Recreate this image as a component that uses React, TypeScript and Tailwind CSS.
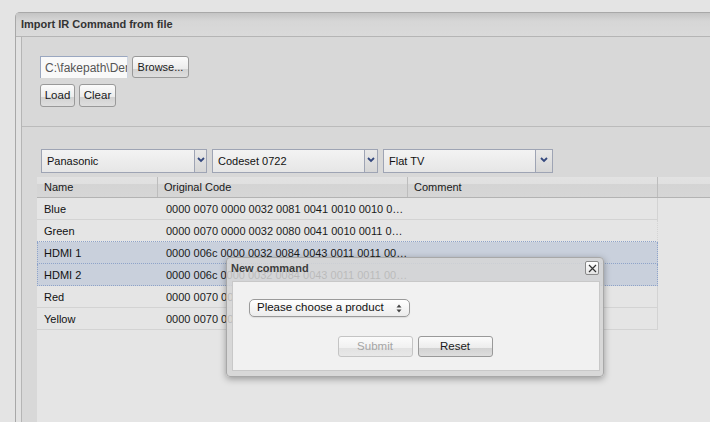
import React from "react";

const rows = [
  { name: "Blue", code: "0000 0070 0000 0032 0081 0041 0010 0010 0010 0030 0010 0030", selected: false },
  { name: "Green", code: "0000 0070 0000 0032 0080 0041 0010 0011 0010 0030 0010 0030", selected: false },
  { name: "HDMI 1", code: "0000 006c 0000 0032 0084 0043 0011 0011 0011 0032 0011 0032", selected: true },
  { name: "HDMI 2", code: "0000 006c 0000 0032 0084 0043 0011 0011 0011 0032 0011 0032", selected: true },
  { name: "Red", code: "0000 0070 0000 0032 0080 0041 0010 0010 0010 0030 0010 0030", selected: false },
  { name: "Yellow", code: "0000 0070 0000 0032 0080 0041 0010 0011 0010 0030 0010 0030", selected: false },
];

const btn =
  "flex items-center justify-center rounded-[3px] border border-[#999] bg-[linear-gradient(#fbfbfb,#ececec_58%,#d2d2d2_58%,#dedede)] text-[11.5px] text-[#1a1a1a]";

function Chevron() {
  return (
    <svg width="8" height="6" viewBox="0 0 8 6" className="-mt-[3px]">
      <polyline points="1,1 4,4 7,1" fill="none" stroke="#34487e" strokeWidth="1.8" />
    </svg>
  );
}

function Combo({ label, width, arrow }: { label: string; width: number; arrow: number }) {
  return (
    <div
      className="flex h-[24px] border border-[#9ea4b4] bg-[linear-gradient(#f3f3f3,#e6e6e6)]"
      style={{ width }}
    >
      <div className="flex flex-1 items-center pl-[5px] pt-[1px] text-[11px] text-[#111]">{label}</div>
      <div
        className="flex items-center justify-center border-l border-[#9ea4b4] bg-[linear-gradient(#e8e8e8,#d6d6d6)]"
        style={{ width: arrow }}
      >
        <Chevron />
      </div>
    </div>
  );
}

function NewCommandDialog() {
  return (
    <div className="absolute left-[226px] top-[257px] flex h-[120px] w-[378px] flex-col rounded-[4px] border border-[#a8a8a8] bg-[#d6d6d6]/85 shadow-[0_2px_7px_rgba(0,0,0,0.35)]">
      <div className="flex h-[23px] items-start justify-between pl-[4px] pr-[4px]">
        <span className="pt-[4px] text-[11px] font-bold leading-[13px] text-[#3c3c3c]">New command</span>
        <button
          type="button"
          className="mt-[3px] flex h-[14px] w-[14px] items-center justify-center rounded-[2px] border border-[#8a8a8a] bg-[linear-gradient(#ffffff,#e4e4e4)]"
        >
          <svg width="9" height="9" viewBox="0 0 9 9">
            <path d="M1 1 L8 8 M8 1 L1 8" stroke="#333" strokeWidth="1.2" />
          </svg>
        </button>
      </div>
      <div className="ml-[5px] h-[90px] w-[368px] border border-[#c8c8c8] bg-[#f1f1f1] pl-[16px] pt-[17px]">
        <div className="flex h-[18px] w-[161px] items-center justify-between rounded-[5px] border border-[#9a9a9a] bg-[linear-gradient(#ffffff,#ececec)] pl-[7px] pr-[7px] shadow-[0_1px_1px_rgba(0,0,0,0.08)]">
          <span className="text-[11.5px] text-[#111]">Please choose a product</span>
          <svg width="6" height="9" viewBox="0 0 6 9">
            <path d="M0.5 3.5 L3 0.5 L5.5 3.5 Z M0.5 5.5 L3 8.5 L5.5 5.5 Z" fill="#444" />
          </svg>
        </div>
        <div className="mt-[19px] flex justify-center gap-[5px] pr-[18px]">
          <button
            type="button"
            disabled
            className="flex h-[21px] w-[75px] items-center justify-center rounded-[3px] border border-[#c4c4c4] bg-[linear-gradient(#fbfbfb,#f0f0f0_60%,#e2e2e2_60%,#e8e8e8)] text-[11.5px] text-[#a5a5a5]"
          >
            Submit
          </button>
          <button type="button" className={`${btn} h-[21px] w-[75px]`}>
            Reset
          </button>
        </div>
      </div>
    </div>
  );
}

export default function App() {
  return (
    <div className="relative h-[422px] w-[710px] overflow-hidden bg-[#e4e4e4] pl-[15px] pt-3 font-['Liberation_Sans',Arial,sans-serif] text-[11px] text-[#111]">
      <div className="flex h-full flex-col rounded-tl-[5px] border-l border-t border-[#a8a8a8] bg-[#e2e2e2]">
        <div className="h-[24px] shrink-0 border-b border-[#b5b5b5] bg-[linear-gradient(#c4c4c4,#d6d6d6_35%,#dadada)] pl-[5px] text-[11px] font-bold leading-[23px] text-[#333]">
          Import IR Command from file
        </div>

        <div className="flex flex-1 pl-[5px]">
          <div className="flex flex-1 flex-col border-l border-[#b5b5b5] bg-[#d8d8d8]">
            {/* file import */}
            <div className="h-[90px] shrink-0 border-b border-[#bbbbbb] pl-[18px] pt-[19px]">
              <div className="flex gap-[4px]">
                <div className="flex h-[22px] w-[88px] items-center overflow-hidden border-l border-t border-r border-[#9aa7c0] border-r-[#cfd6e2] bg-[#f9f9f9] pl-[4px] text-[12px] whitespace-nowrap text-[#555]">
                  C:\fakepath\Denon.ir
                </div>
                <button type="button" className={`${btn} h-[22px] w-[57px] pt-[1px] !text-[11px]`}>
                  Browse...
                </button>
              </div>
              <div className="mt-[6px] flex gap-[4px]">
                <button type="button" className={`${btn} h-[23px] w-[35px] pt-[1px]`}>
                  Load
                </button>
                <button type="button" className={`${btn} h-[23px] w-[37px] pt-[1px]`}>
                  Clear
                </button>
              </div>
            </div>

            {/* command grid */}
            <div className="flex flex-1 flex-col pt-[22px]">
              <div className="flex gap-[5px] pl-[19px]">
                <Combo label="Panasonic" width={166} arrow={12} />
                <Combo label="Codeset 0722" width={166} arrow={13} />
                <Combo label="Flat TV" width={170} arrow={17} />
              </div>

              <div className="ml-[15px] mt-[4px] flex flex-1 flex-col bg-[#e5e5e5]">
                <div className="flex h-[21px] shrink-0 border-b border-[#b3b3b3] bg-[linear-gradient(#e2e2e2_0%,#e0e0e0_33%,#d4d4d4_33%,#d6d6d6)] text-[11px] text-[#1a1a1a]">
                  <div className="flex w-[121px] items-center border-r border-[#bdbdbd] pl-[7px]">Name</div>
                  <div className="flex w-[250px] items-center border-r border-[#bdbdbd] pl-[6px]">Original Code</div>
                  <div className="flex w-[250px] items-center border-r border-[#bdbdbd] pl-[6px]">Comment</div>
                  <div className="flex-1" />
                </div>

                {rows.map((row, i) => {
                  const nextSelected = rows[i + 1]?.selected ?? false;
                  const dottedBottom = row.selected || nextSelected;
                  return (
                    <div
                      key={row.name}
                      className={`flex h-[22px] w-[621px] items-center border-b border-r pt-[1px] ${
                        dottedBottom ? "border-b-[#8ea3c9] border-dotted" : "border-[#d3d3d3]"
                      } ${
                        row.selected
                          ? "border-l border-dotted border-l-[#8ea3c9] border-r-[#8ea3c9] bg-[#c9d0dc]"
                          : "border-r-[#d3d3d3]"
                      }`}
                    >
                      <div className={`${row.selected ? "w-[120px] pl-[6px]" : "w-[121px] pl-[7px]"} text-[11px]`}>
                        {row.name}
                      </div>
                      <div className="w-[250px] truncate pl-[8px] text-[11px] text-[#1a1a1a]">{row.code}</div>
                      <div className="flex-1" />
                    </div>
                  );
                })}
              </div>
            </div>
          </div>
        </div>
      </div>

      <NewCommandDialog />
    </div>
  );
}
